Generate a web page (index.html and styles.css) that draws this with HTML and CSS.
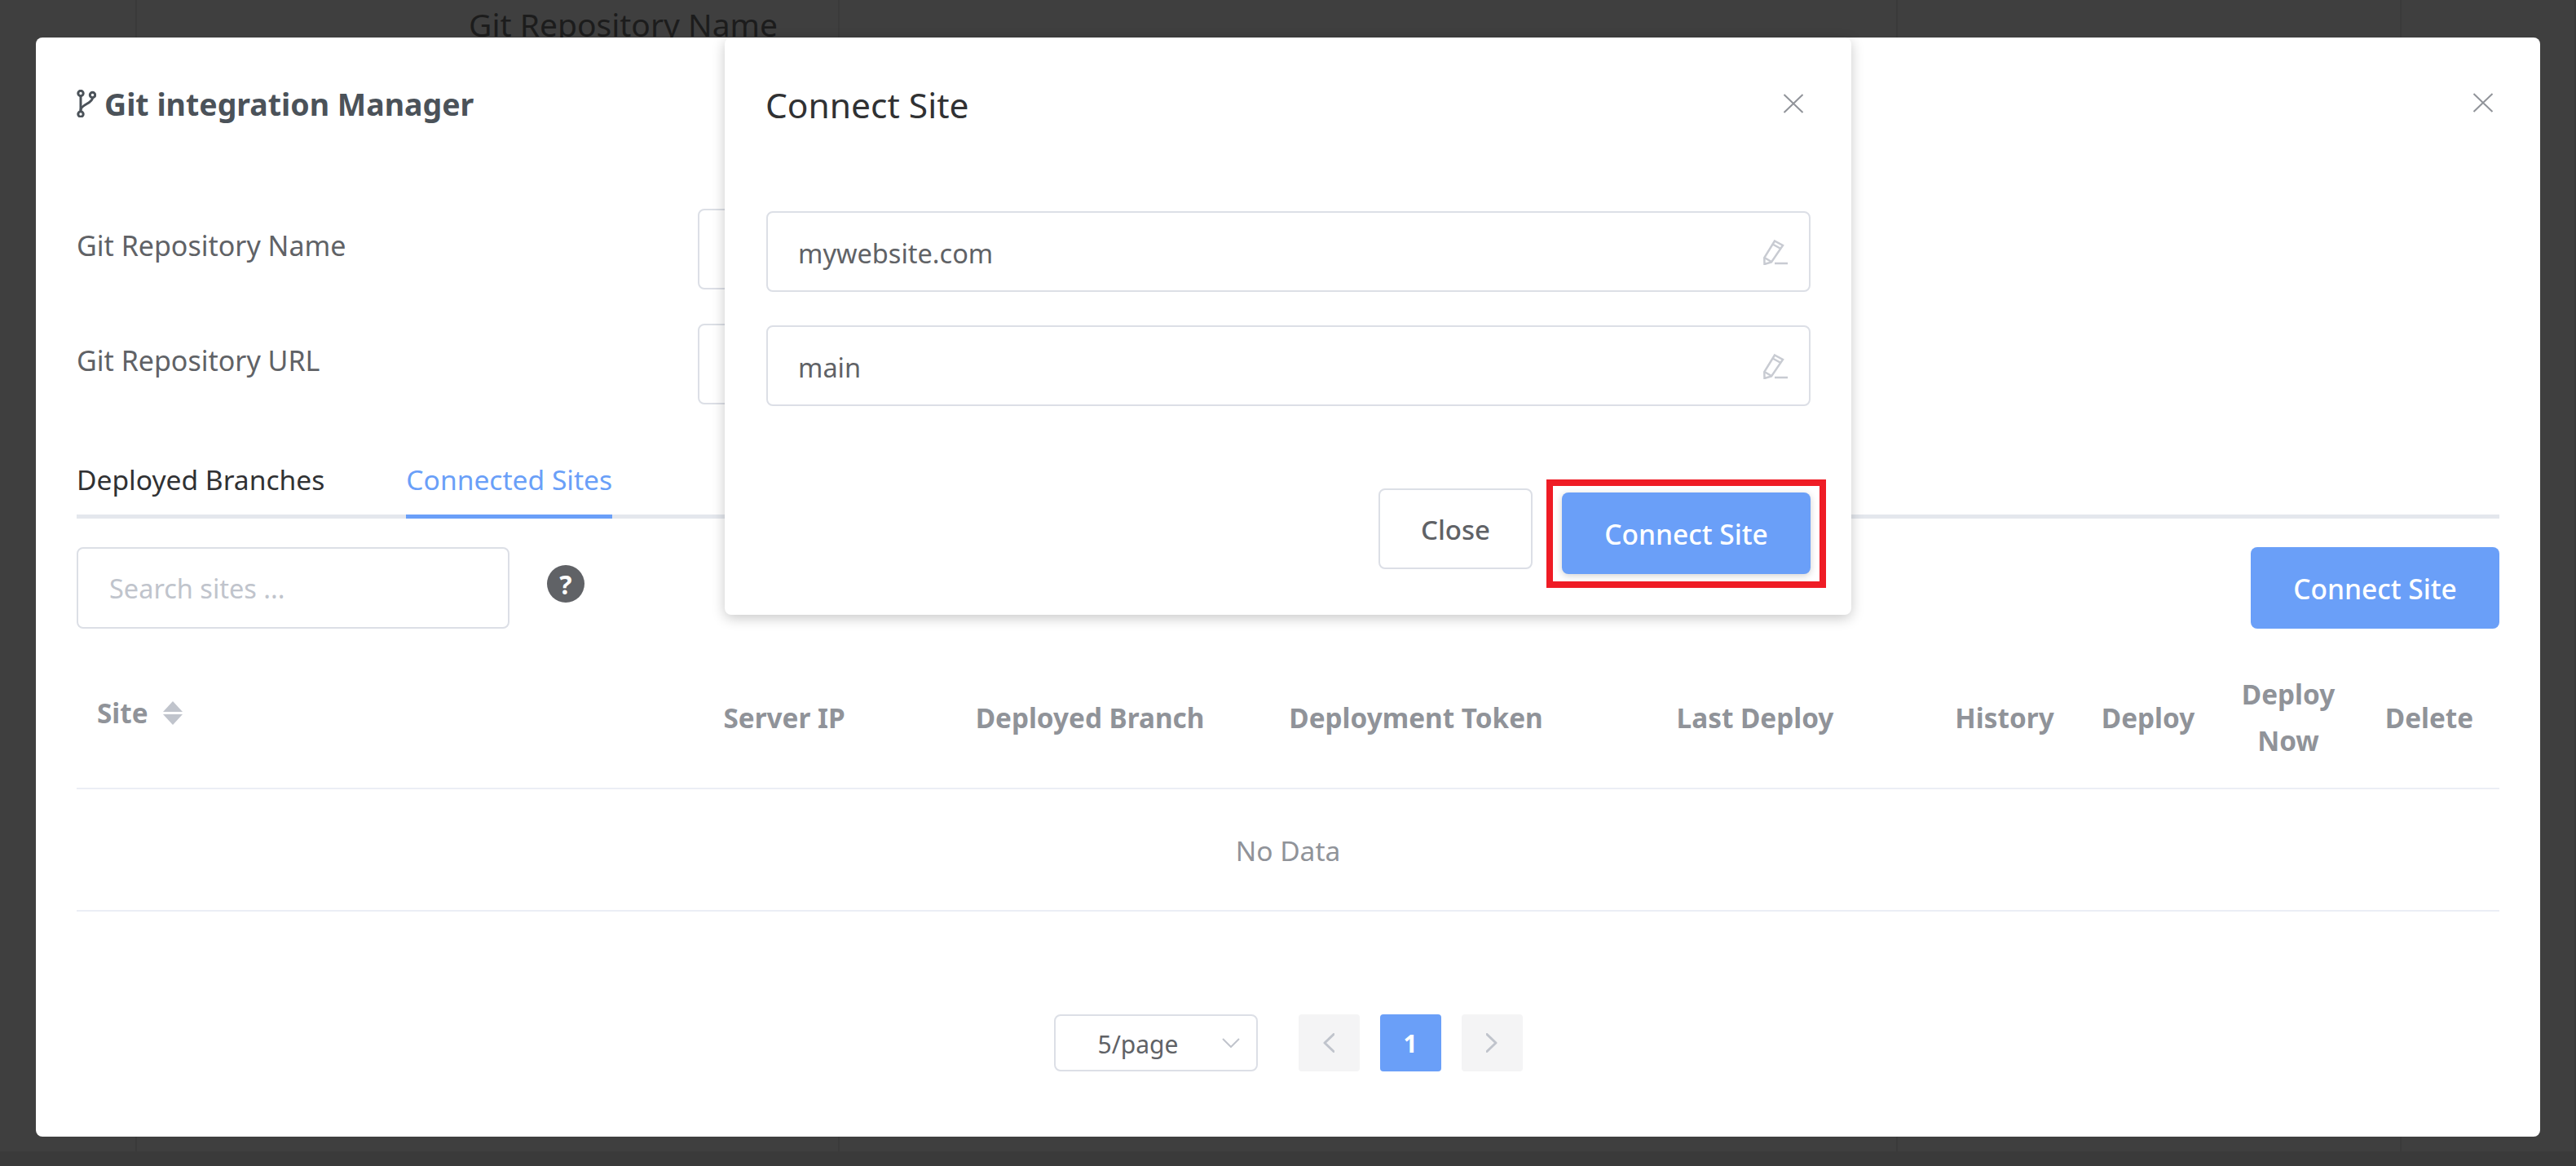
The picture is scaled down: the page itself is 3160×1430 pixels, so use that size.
FILE: index.html
```html
<!DOCTYPE html>
<html lang="en">
<head>
    <meta charset="UTF-8">
    <meta name="viewport" content="width=device-width, initial-scale=1.0">
    <title>Git integration Manager</title>
    <link rel="stylesheet" href="styles.css">
</head>
<body>
    <!-- Page behind the overlay -->
    <div class="page-behind">
        <div class="behind-cell behind-first"></div>
        <div class="behind-cell behind-name">Git Repository Name</div>
        <div class="behind-cell behind-wide"></div>
        <div class="behind-cell behind-mid"></div>
        <div class="behind-cell"></div>
    </div>
    <div class="page-behind-foot"></div>

    <!-- Main modal -->
    <section class="modal manager">
        <header class="manager-head">
            <svg class="git-icon" viewBox="0 0 24 34" width="24" height="34" fill="none" stroke="#4b5259" stroke-width="3">
                <circle cx="5" cy="4.500" r="3.200"/>
                <circle cx="19.500" cy="6.500" r="3.200"/>
                <circle cx="5" cy="30" r="3.200"/>
                <path d="M5 8v18.500"/>
                <path d="M19.500 10c0 7-14.500 8-14.500 15"/>
            </svg>
            <h1>Git integration Manager</h1>
            <svg class="close-icon" viewBox="0 0 26 24" width="26" height="24"><path d="M1.500 1 24.500 23M24.500 1 1.500 23"/></svg>
        </header>

        <div class="form-row">
            <label>Git Repository Name</label>
            <div class="field field-name"><input type="text"></div>
            <button class="btn btn-faded"></button>
        </div>
        <div class="form-row form-row-url">
            <label>Git Repository URL</label>
            <div class="field field-name"><input type="text"></div>
        </div>

        <nav class="tabs">
            <a href="#">Deployed Branches</a>
            <a href="#" class="active">Connected Sites</a>
        </nav>

        <div class="toolbar">
            <div class="field field-search"><input type="text" placeholder="Search sites ..."></div>
            <div class="help">?</div>
            <button class="btn btn-primary">Connect Site</button>
        </div>

        <div class="table-head">
            <div class="th th-site">Site
                <span class="sort"><i class="caret-up"></i><i class="caret-down"></i></span>
            </div>
            <div class="th">Server IP</div>
            <div class="th">Deployed Branch</div>
            <div class="th">Deployment Token</div>
            <div class="th">Last Deploy</div>
            <div class="th">History</div>
            <div class="th">Deploy</div>
            <div class="th th-wrap">Deploy<br>Now</div>
            <div class="th">Delete</div>
        </div>
        <div class="table-empty">No Data</div>

        <div class="pagination">
            <div class="page-size">
                <span>5/page</span>
                <svg viewBox="0 0 22 12" width="22" height="12" fill="none" stroke="#c0c4cc" stroke-width="2"><path d="M1 1l10 10L21 1"/></svg>
            </div>
            <div class="page-btn">
                <svg viewBox="0 0 14 24" width="14" height="24" fill="none" stroke="#c0c4cc" stroke-width="3" stroke-linecap="round" stroke-linejoin="round"><path d="M13 1.500 2 12l11 10.500"/></svg>
            </div>
            <div class="page-btn page-current">1</div>
            <div class="page-btn">
                <svg viewBox="0 0 14 24" width="14" height="24" fill="none" stroke="#c0c4cc" stroke-width="3" stroke-linecap="round" stroke-linejoin="round"><path d="M1 1.500 12 12 1 22.500"/></svg>
            </div>
        </div>
    </section>

    <!-- Connect Site dialog -->
    <section class="modal connect">
        <header class="connect-head">
            <h2>Connect Site</h2>
            <svg class="close-icon" viewBox="0 0 26 24" width="26" height="24"><path d="M1.500 1 24.500 23M24.500 1 1.500 23"/></svg>
        </header>
        <div class="field field-edit">
            <input type="text" value="mywebsite.com">
            <svg class="pencil" viewBox="0 0 30 31" width="30" height="31" fill="none" stroke="#c8cbd2" stroke-width="2.500"><path d="M14 1.500 24 7 10 27.500 1.500 30l-.2-8z"/><path d="M11.500 5.500l10 5.500"/><path d="M1.500 22l8.500 5"/><path d="M14 29h16"/></svg>
        </div>
        <div class="field field-edit">
            <input type="text" value="main">
            <svg class="pencil" viewBox="0 0 30 31" width="30" height="31" fill="none" stroke="#c8cbd2" stroke-width="2.500"><path d="M14 1.500 24 7 10 27.500 1.500 30l-.2-8z"/><path d="M11.500 5.500l10 5.500"/><path d="M1.500 22l8.500 5"/><path d="M14 29h16"/></svg>
        </div>
        <footer class="connect-foot">
            <button class="btn btn-plain">Close</button>
            <div class="red-box">
                <button class="btn btn-primary btn-raised">Connect Site</button>
            </div>
        </footer>
    </section>
</body>
</html>
```

FILE: styles.css
```css
/* General Styling */
* {
    box-sizing: border-box;
}

body {
    margin: 0;
    height: 1430px;
    overflow: hidden;
    position: relative;
    background-color: #3f3f3f;
    font-family: "Noto Sans", "Open Sans", sans-serif;
    color: #606266;
}

input,
button {
    font-family: inherit;
}

/* Page behind the overlay */
.page-behind {
    display: flex;
    height: 1412px;
}

.behind-cell {
    flex: 1;
    border-right: 2px solid #3a3a3a;
}

.behind-first {
    flex: 0 0 168px;
}

.behind-name {
    flex: 0 0 862px;
    padding: 5px 0 0 407px;
    font-size: 39px;
    line-height: 50px;
    color: #1c1c1c;
    white-space: nowrap;
}

.behind-wide {
    flex: 0 0 1298px;
}

.behind-mid {
    flex: 0 0 618px;
}

.page-behind-foot {
    height: 18px;
    background-color: #3a3a3a;
}

/* Modals */
.modal {
    position: absolute;
    top: 46px;
    background-color: #fff;
    border-radius: 8px;
}

.manager {
    left: 44px;
    width: 3072px;
    height: 1348px;
    padding: 0 50px;
}

.connect {
    left: 889px;
    width: 1382px;
    height: 708px;
    padding: 0 50px 0 51px;
    box-shadow: 0 4px 16px rgba(0, 0, 0, 0.22);
}

.close-icon {
    margin-left: auto;
    margin-top: -4px;
    fill: none;
    stroke: #909399;
    stroke-width: 2;
}

/* Main modal header */
.manager-head {
    display: flex;
    align-items: center;
    height: 162px;
    margin-right: 7px;
}

.manager-head .close-icon {
    margin-top: -2px;
}

.git-icon {
    margin-right: 10px;
}

.manager-head h1 {
    margin: 0;
    font-size: 37.500px;
    font-weight: 700;
    color: #4b5259;
}

/* Form rows */
.form-row {
    display: flex;
    align-items: flex-start;
    margin-top: 48px;
}

.form-row label {
    width: 762px;
    font-size: 34px;
    line-height: 90px;
}

.form-row-url {
    margin-top: 42px;
}

.field {
    display: flex;
    align-items: center;
    height: 99px;
    border: 2px solid #dcdfe6;
    border-radius: 8px;
    background-color: #fff;
}

.field input {
    flex: 1;
    min-width: 0;
    height: 100%;
    padding: 4px 0 0 37px;
    border: none;
    outline: none;
    background: transparent;
    font-size: 32.500px;
    color: #606266;
}

.field input::placeholder {
    color: #c0c4cc;
}

.field-name {
    width: 1300px;
}

/* Buttons */
.btn {
    border: none;
    border-radius: 8px;
    font-size: 33.500px;
    cursor: pointer;
}

.btn-primary {
    width: 305px;
    height: 100px;
    padding-top: 2px;
    background-color: #6a9ff8;
    color: #fff;
    font-weight: 500;
}

.btn-raised {
    box-shadow: 0 2px 8px rgba(0, 0, 0, 0.18);
}

.btn-faded {
    width: 80px;
    height: 92px;
    background-color: #a0c2e6;
    margin-left: 20px;
}

.btn-plain {
    width: 189px;
    height: 99px;
    padding-top: 3px;
    border: 2px solid #dcdfe6;
    background-color: #fff;
    color: #606266;
    font-size: 33px;
    font-weight: 500;
}

/* Tabs */
.tabs {
    display: flex;
    gap: 100px;
    height: 91px;
    margin-top: 49px;
    border-bottom: 5px solid #e4e7ed;
}

.tabs a {
    height: 91px;
    padding-top: 21px;
    font-size: 33.600px;
    line-height: 44px;
    color: #303133;
    text-decoration: none;
    white-space: nowrap;
}

.tabs a.active {
    color: #6a9ff8;
    border-bottom: 5px solid #6a9ff8;
}

/* Toolbar */
.toolbar {
    display: flex;
    align-items: flex-start;
    margin-top: 35px;
}

.field-search {
    width: 531px;
    height: 100px;
}

.field-search input {
    padding-top: 0;
    padding-left: 38px;
}

.help {
    display: flex;
    align-items: center;
    justify-content: center;
    width: 46px;
    height: 46px;
    margin: 22px 0 0 46px;
    border-radius: 50%;
    background-color: #606266;
    color: #fff;
    font-size: 32px;
    font-weight: 700;
}

.toolbar .btn-primary {
    margin-left: auto;
}

/* Table */
.table-head {
    display: grid;
    grid-template-columns: 688px 360px 390px 410px 422px 190px 162px 182px 164px;
    align-items: center;
    height: 197px;
    padding-top: 20px;
    border-bottom: 2px solid #ebeef5;
}

.th {
    font-size: 33.300px;
    font-weight: 700;
    line-height: 57px;
    color: #909399;
    text-align: center;
    padding-top: 4px;
}

.th-wrap {
    padding-top: 2px;
}

.th-site {
    display: flex;
    align-items: center;
    padding: 0 0 8px 25px;
    text-align: left;
}

.sort {
    display: flex;
    flex-direction: column;
    gap: 3px;
    margin-left: 18px;
}

.caret-up,
.caret-down {
    display: block;
    width: 0;
    height: 0;
    border-left: 12.500px solid transparent;
    border-right: 12.500px solid transparent;
}

.caret-up {
    border-bottom: 13px solid #c0c4cc;
}

.caret-down {
    border-top: 13px solid #c0c4cc;
}

.table-empty {
    display: flex;
    align-items: center;
    justify-content: center;
    height: 150px;
    padding-top: 2px;
    border-bottom: 2px solid #ebeef5;
    font-size: 33.500px;
    color: #909399;
}

/* Pagination */
.pagination {
    display: flex;
    justify-content: center;
    align-items: center;
    gap: 25px;
    margin-top: 126px;
}

.page-size {
    display: flex;
    align-items: center;
    width: 250px;
    height: 70px;
    margin-right: 25px;
    padding: 2px 20px 0 52px;
    border: 2px solid #dcdfe6;
    border-radius: 8px;
    font-size: 30px;
}

.page-size svg {
    margin-left: auto;
    margin-top: -2px;
}

.page-btn {
    display: flex;
    align-items: center;
    justify-content: center;
    width: 75px;
    height: 70px;
    border-radius: 4px;
    background-color: #f4f4f5;
}

.page-current {
    background-color: #6a9ff8;
    color: #fff;
    font-size: 30px;
    font-weight: 700;
}

/* Connect Site dialog */
.connect-head {
    display: flex;
    align-items: center;
    height: 168px;
}

.connect-head h2 {
    margin: 0 0 4px -1px;
    font-size: 42.500px;
    font-weight: 400;
    color: #303133;
}

.connect-head .close-icon {
    margin-right: 8px;
    margin-top: -6px;
}

.field-edit {
    margin-top: 45px;
    margin-bottom: -4px;
    padding-right: 26px;
}

.connect-head + .field-edit {
    margin-top: 45px;
}

.pencil {
    margin-top: 1px;
}

.connect-foot {
    display: flex;
    justify-content: flex-end;
    align-items: flex-start;
    margin: 94px -19px 0 0;
}

.connect-foot .btn-plain {
    margin: 11px 17px 0 0;
}

/* Annotation round the button */
.red-box {
    padding: 8px 11px 9px;
    border: 8px solid #ef1c25;
}
```
